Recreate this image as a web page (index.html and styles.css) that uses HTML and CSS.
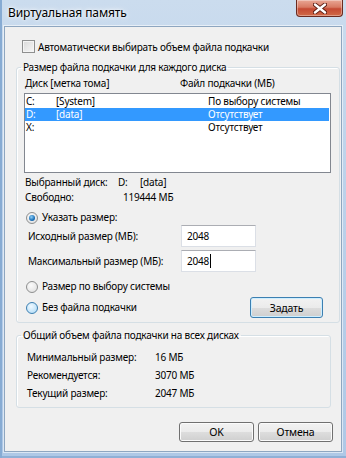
FILE: index.html
```html
<!DOCTYPE html>
<html lang="ru">
<head>
    <meta charset="UTF-8">
    <meta name="viewport" content="width=device-width, initial-scale=1.0">
    <title>Виртуальная память</title>
    <link rel="stylesheet" href="styles.css">
</head>
<body>
    <div class="window">
        <div class="titlebar">
            <span class="title">Виртуальная память</span>
            <span class="close-btn">
                <svg width="14" height="11" viewBox="0 0 14 11">
                    <path d="M2 1.5 L12 9.5 M12 1.5 L2 9.5" stroke="#5a1a10" stroke-width="4.2" stroke-linecap="round"/>
                    <path d="M2 1.5 L12 9.5 M12 1.5 L2 9.5" stroke="#ffffff" stroke-width="2.4" stroke-linecap="round"/>
                </svg>
            </span>
        </div>
        <div class="client">
            <div class="check-row">
                <span class="checkbox"></span>
                <span>Автоматически выбирать объем файла подкачки</span>
            </div>

            <fieldset class="group group-drives">
                <legend>Размер файла подкачки для каждого диска</legend>
                <div class="list-head">
                    <span class="head-drive">Диск [метка тома]</span>
                    <span>Файл подкачки (МБ)</span>
                </div>
                <div class="listbox">
                    <div class="list-row">
                        <span class="col-letter">C:</span>
                        <span class="col-label">[System]</span>
                        <span>По выбору системы</span>
                    </div>
                    <div class="list-row selected">
                        <span class="col-letter">D:</span>
                        <span class="col-label">[data]</span>
                        <span>Отсутствует</span>
                    </div>
                    <div class="list-row">
                        <span class="col-letter">X:</span>
                        <span class="col-label"></span>
                        <span>Отсутствует</span>
                    </div>
                </div>

                <div class="info">
                    <div class="info-row">
                        <span class="info-label">Выбранный диск:</span>
                        <span class="drive-letter">D:</span>
                        <span>[data]</span>
                    </div>
                    <div class="info-row">
                        <span class="info-label wide">Свободно:</span>
                        <span>119444 МБ</span>
                    </div>
                </div>

                <div class="radio-row first">
                    <span class="radio checked"></span>
                    <span>Указать размер:</span>
                </div>
                <div class="field-row">
                    <span class="field-label">Исходный размер (МБ):</span>
                    <span class="textbox">2048</span>
                </div>
                <div class="field-row">
                    <span class="field-label">Максимальный размер (МБ):</span>
                    <span class="textbox">2048<span class="caret"></span></span>
                </div>
                <div class="radio-row second">
                    <span class="radio"></span>
                    <span>Размер по выбору системы</span>
                </div>
                <div class="set-row">
                    <div class="radio-row">
                        <span class="radio hover"></span>
                        <span>Без файла подкачки</span>
                    </div>
                    <button class="btn btn-default">Задать</button>
                </div>
            </fieldset>

            <fieldset class="group group-total">
                <legend>Общий объем файла подкачки на всех дисках</legend>
                <div class="total-row">
                    <span class="total-label">Минимальный размер:</span>
                    <span>16 МБ</span>
                </div>
                <div class="total-row">
                    <span class="total-label">Рекомендуется:</span>
                    <span>3070 МБ</span>
                </div>
                <div class="total-row">
                    <span class="total-label">Текущий размер:</span>
                    <span>2047 МБ</span>
                </div>
            </fieldset>

            <div class="buttons">
                <button class="btn">OK</button>
                <button class="btn">Отмена</button>
            </div>
        </div>
    </div>
</body>
</html>
```

FILE: styles.css
```css
body {
    margin: 0;
    padding: 0;
    font-family: "Noto Sans", "Open Sans", sans-serif;
    font-size: 10px;
    letter-spacing: -0.2px;
    color: #000;
    background: #fff;
    white-space: nowrap;
}
.window {
    width: 346px;
    height: 458px;
    box-sizing: border-box;
    background: linear-gradient(to bottom, #cbdcee 0%, #bdd2ea 40%, #aec8e6 100%);
    box-shadow: inset 2px 0 0 #87abd3, inset 0 -2px 0 #8fb0d6;
    display: flex;
    flex-direction: column;
}
.titlebar {
    height: 26px;
    display: flex;
    justify-content: space-between;
    align-items: flex-start;
}
.title {
    margin: 5px 0 0 8px;
    line-height: 16px;
    font-size: 12px;
    letter-spacing: -0.1px;
    text-shadow: 0 0 6px #fff, 0 0 3px #fff;
}
.close-btn {
    width: 47px;
    height: 17px;
    margin-right: 3px;
    box-sizing: border-box;
    border: 1px solid #6b2a1f;
    border-top: none;
    border-radius: 0 0 4px 4px;
    background: linear-gradient(to bottom, #e9a795 0%, #d87a63 45%, #c54a33 55%, #d06a48 100%);
    box-shadow: inset 0 0 0 1px rgba(255, 255, 255, 0.35);
    display: flex;
    justify-content: center;
    align-items: center;
}
.client {
    margin: 0 4px;
    height: 426px;
    box-sizing: border-box;
    background: #f0f0f0;
    border: 1px solid #8ea6c0;
    box-shadow: 0 0 0 1px rgba(255, 255, 255, 0.55);
    display: flex;
    flex-direction: column;
}
.client span {
    flex-shrink: 0;
}
.check-row {
    display: flex;
    align-items: center;
    height: 13px;
    margin: 13px 0 0 17px;
}
.checkbox {
    width: 13px;
    height: 13px;
    box-sizing: border-box;
    border: 1px solid #8e8f8f;
    background: linear-gradient(135deg, #d9d9d9, #f7f7f7);
    box-shadow: inset 0 0 0 1px #f4f4f4;
    margin-right: 3px;
}
.group {
    margin: 7px 0 0 11px;
    border: 1px solid #d5dfe5;
    border-radius: 3px;
    min-width: 0;
    box-shadow: inset 1px 1px 0 #fff;
}
.group legend {
    padding: 0 2px;
    line-height: 15px;
}
.group-drives {
    width: 324px;
    box-sizing: border-box;
    padding: 1px 8px 4px 7px;
}
.group-drives legend {
    margin-left: -3px;
}
.list-head {
    display: flex;
    line-height: 15px;
    padding-left: 1px;
}
.head-drive {
    width: 155px;
}
.listbox {
    margin-top: 2px;
    height: 80px;
    box-sizing: border-box;
    border: 1px solid #828790;
    background: #fff;
    padding-top: 1px;
}
.list-row {
    display: flex;
    height: 13px;
    line-height: 13px;
    padding-left: 1px;
    margin-right: 1px;
}
.list-row.selected {
    background: #3399ff;
    color: #fff;
}
.col-letter {
    width: 30px;
}
.col-label {
    width: 152px;
}
.info {
    margin-top: 2px;
    padding-left: 1px;
}
.info-row {
    display: flex;
    line-height: 15px;
}
.info-label {
    width: 93px;
}
.info-label.wide {
    width: 98px;
}
.drive-letter {
    width: 22px;
}
.radio-row {
    display: flex;
    align-items: center;
    line-height: 15px;
    padding-left: 2px;
}
.radio-row.first {
    margin-top: 5px;
}
.radio-row.second {
    margin-top: 7px;
}
.radio {
    width: 12px;
    height: 12px;
    box-sizing: border-box;
    border-radius: 50%;
    border: 1px solid #8e8f8f;
    background: radial-gradient(circle at 40% 35%, #fbfbfb, #dcdcdc);
    margin-right: 4px;
    display: flex;
    justify-content: center;
    align-items: center;
}
.radio.checked::after {
    content: "";
    width: 6px;
    height: 6px;
    border-radius: 50%;
    background: radial-gradient(circle at 40% 35%, #8fd0f8, #1a6fb7 60%, #0e4f8f);
}
.radio.hover {
    border-color: #3c7fb1;
    background: radial-gradient(circle at 40% 35%, #f0f9ff, #a9d8f6);
}
.field-row {
    display: flex;
    align-items: center;
    height: 22px;
    margin-top: 3px;
    padding-left: 4px;
}
.radio-row.first + .field-row {
    margin-top: 0;
}
.field-label {
    width: 153px;
}
.textbox {
    width: 75px;
    height: 22px;
    box-sizing: border-box;
    border: 1px solid #dbdfe6;
    border-top-color: #abadb3;
    background: #fff;
    padding-left: 5px;
    line-height: 20px;
    display: flex;
    align-items: center;
}
.caret {
    width: 1px;
    height: 14px;
    background: #000;
    margin-left: 1px;
}
.set-row {
    display: flex;
    justify-content: space-between;
    align-items: center;
    margin-top: 3px;
}
.btn {
    font-family: inherit;
    font-size: 10.5px;
    letter-spacing: -0.2px;
    color: #000;
    width: 75px;
    height: 20px;
    padding: 0;
    border: 1px solid #707070;
    border-radius: 3px;
    background: linear-gradient(to bottom, #f2f2f2 0%, #ebebeb 50%, #dddddd 51%, #cfcfcf 100%);
    box-shadow: inset 0 0 0 1px #fbfbfb;
}
.btn-default {
    width: 73px;
    height: 21px;
    margin-right: 8px;
    border-color: #3c7fb1;
    box-shadow: inset 0 0 0 1px #cdeeff;
}
.group-total {
    width: 315px;
    box-sizing: border-box;
    margin-top: 5px;
    padding: 5px 8px 5px 10px;
}
.group-total legend {
    margin-left: -6px;
}
.total-row {
    display: flex;
    line-height: 18px;
}
.total-label {
    width: 128px;
}
.buttons {
    display: flex;
    justify-content: flex-end;
    gap: 4px;
    margin: 14px 8px 0 0;
}
```
